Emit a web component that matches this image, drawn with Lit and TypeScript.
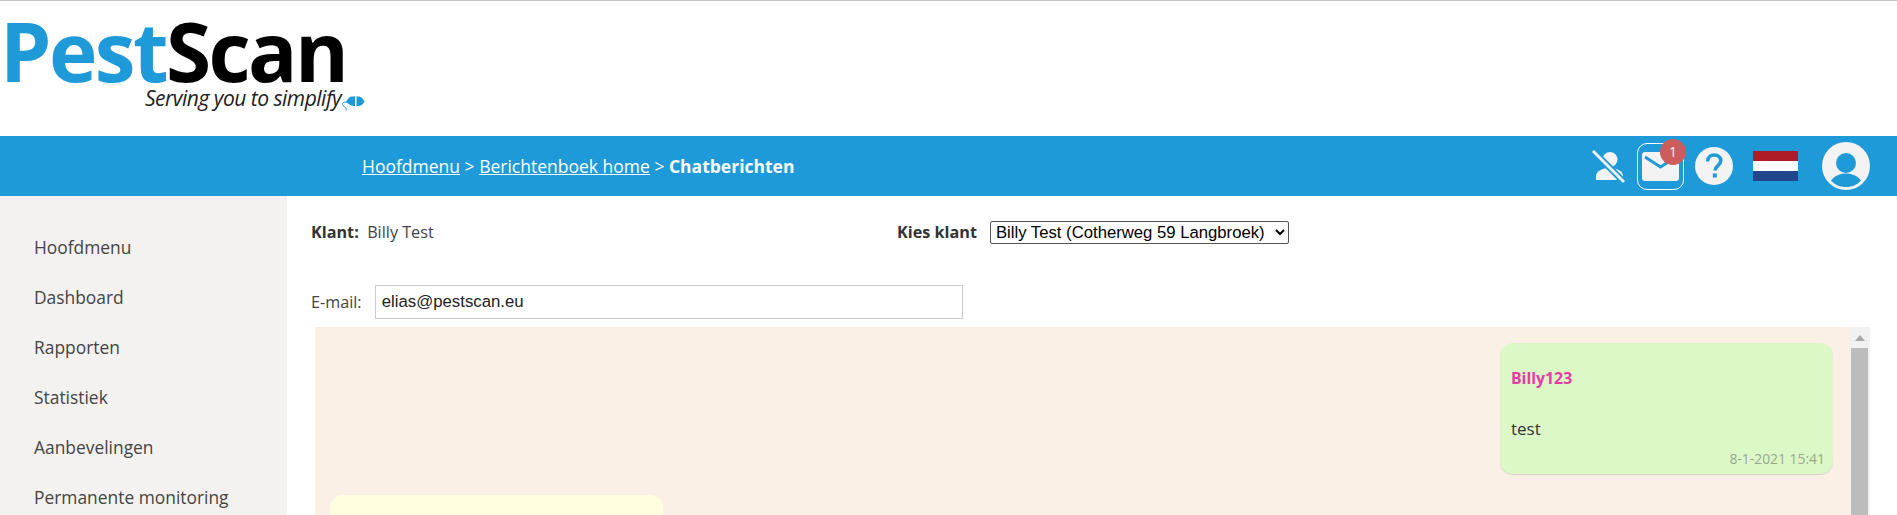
import { LitElement, html, css } from "lit";
import { customElement } from "lit/decorators.js";

const MENU = ["Hoofdmenu", "Dashboard", "Rapporten", "Statistiek", "Aanbevelingen", "Permanente monitoring"];

@customElement("app-root")
export class AppRoot extends LitElement {
  static styles = css`
    :host { display: block; height: 515px; overflow: hidden; font-family: "Open Sans", sans-serif; color: #444; background: #fff; }
    * { box-sizing: border-box; }
    .logo { height: 136px; border-top: 1px solid #c8c4cc; padding: 11px 0 0 0; display: flex; flex-direction: column; align-items: flex-start; }
    .brand { font-size: 82px; line-height: 76px; font-weight: 700; letter-spacing: -2.6px; color: #1f9ad9; white-space: nowrap; }
    .brand b { color: #000; font-weight: 700; }
    .slogan { display: flex; align-items: flex-start; margin: 0 0 0 145px; font-size: 21px; line-height: 20px; font-style: italic; letter-spacing: -.5px; color: #222; white-space: nowrap; }
    .slogan svg { margin: 8px 0 0 0; display: block; }
    .bar { height: 60px; background: #1f9ad9; display: flex; align-items: center; padding-left: 362px; color: #fff; font-size: 17.5px; }
    .crumbs { flex: 1; white-space: pre; }
    .crumbs u { text-decoration: underline; }
    .crumbs b { font-weight: 700; }
    .tools { display: flex; align-items: center; }
    .tools svg { display: block; }
    .off { margin-right: 12px; }
    .mail { position: relative; width: 47px; height: 47px; border: 1.5px solid #fff; border-radius: 10px; display: flex; align-items: center; justify-content: center; margin-right: 11px; }
    .badge { position: absolute; top: -5px; right: -3px; width: 26px; height: 26px; border-radius: 50%; background: #cd5c5c; color: #f3f3f3; font-size: 14px; line-height: 26px; text-align: center; }
    .flag { margin: 0 0 0 20px; width: 45px; height: 30px; display: flex; flex-direction: column; }
    .flag i { flex: 1; }
    .avatar { margin: 0 27px 0 24px; }
    .main { display: flex; height: 319px; }
    .side { width: 287px; background: #f3f2f1; padding: 26px 0 0 34px; }
    .side a { display: block; height: 50px; line-height: 50px; font-size: 17.4px; color: #444; white-space: nowrap; }
    .content { flex: 1; padding: 20px 27px 0 24px; font-size: 16.2px; min-width: 0; }
    .row1 { display: flex; align-items: center; height: 32px; }
    .klant { width: 586px; }
    label b, .klant b { font-weight: 700; color: #333; }
    select { font: 16.7px "Liberation Sans", sans-serif; width: 299px; height: 23px; margin-left: 13px; padding-left: 1px; color: #000; background: #fff; border: 1px solid #555; border-radius: 2px; }
    .row2 { display: flex; align-items: center; margin-top: 37px; height: 34px; }
    input { margin-left: 13px; width: 588px; height: 34px; border: 1px solid #ccc; padding: 0 6px; font: 16.8px "Liberation Sans", sans-serif; color: #222; }
    .panel { margin: 8px 0 0 4px; height: 300px; background: #faf0e6; display: flex; }
    .msgs { flex: 1; padding: 16px 17px 0 15px; display: flex; flex-direction: column; gap: 21px; min-width: 0; }
    .bubble { width: 333px; border-radius: 13px; }
    .me { align-self: flex-end; height: 131px; background: #dcf8c6; box-shadow: 0 1px 1px rgba(0,0,0,.13); padding: 24px 8px 0 11px; display: flex; flex-direction: column; }
    .them { height: 120px; background: #ffffe0; }
    .name { color: #e83aa5; font-weight: 700; font-size: 15.8px; line-height: 22px; }
    .txt { margin-top: 29px; font-size: 17px; line-height: 22px; color: #333; }
    .time { margin-top: 10px; text-align: right; font-size: 13.9px; line-height: 18px; color: #98a88e; }
    .sb { width: 20px; background: #f1f1f1; padding: 0 2px 0 1px; display: flex; flex-direction: column; }
    .arrow { height: 21px; display: flex; align-items: center; justify-content: center; }
    .thumb { flex: 1; background: #bcbcbc; }
  `;

  render() {
    return html`
      <div class="logo">
        <div class="brand">Pest<b>Scan</b></div>
        <div class="slogan">Serving you to simplify
          <svg width="24" height="16" viewBox="0 0 24 16">
            <path d="M14 0.500H10C8 1 6 4 5 5.500c2 2 4 4.500 9 4.500z" fill="#1f9ad9"/>
            <path d="M15.500 0.500H18c2.500 0 4.500 3 5.500 5-1 2-3 4.500-5.500 4.500h-2.500z" fill="#1f9ad9"/>
            <path d="M7 6.500C3 5.500 0 7 2 9.500c2 1.500 4 2.500 3 5" fill="none" stroke="#1f9ad9" stroke-width="1"/>
          </svg>
        </div>
      </div>
      <div class="bar">
        <div class="crumbs"><u>Hoofdmenu</u> &gt; <u>Berichtenboek home</u> &gt; <b>Chatberichten</b></div>
        <div class="tools">
          <svg class="off" width="33" height="33" viewBox="0 0 33 33">
            <circle cx="18" cy="9.500" r="7.500" fill="#f3f3f3"/>
            <path d="M4 30v-4c0-5 7-8 13-8 8 0 14 3 14 8v4z" fill="#f3f3f3"/>
            <path d="M1 1l31 31" stroke="#1f9ad9" stroke-width="6.500"/>
            <path d="M1 1l31 31" stroke="#f3f3f3" stroke-width="2.800"/>
          </svg>
          <div class="mail">
            <svg width="37" height="29" viewBox="0 0 37 29">
              <rect width="37" height="29" rx="3" fill="#f3f3f3"/>
              <path d="M3 5l15.500 10L34 5" fill="none" stroke="#1f9ad9" stroke-width="3"/>
            </svg>
            <span class="badge">1</span>
          </div>
          <svg width="38" height="38" viewBox="0 0 38 38">
            <circle cx="19" cy="19" r="19" fill="#f3f3f3"/>
            <path d="M12.500 14.500c0-4 3-6.500 6.800-6.500 3.800 0 6.500 2.300 6.500 5.600 0 5-5.800 5-5.800 10" fill="none" stroke="#1f9ad9" stroke-width="3.600"/>
            <rect x="17.800" y="26.500" width="4" height="4" fill="#1f9ad9"/>
          </svg>
          <div class="flag"><i style="background:#ae1c28"></i><i style="background:#fff"></i><i style="background:#21468b"></i></div>
          <svg class="avatar" width="48" height="48" viewBox="0 0 48 48">
            <circle cx="24" cy="24" r="24" fill="#f3f3f3"/>
            <circle cx="24" cy="21" r="10" fill="#1f9ad9"/>
            <path d="M9 38.500c4-5 9-7 15-7s11 2 15 7c-4 4.500-9 6.500-15 6.500S13 43 9 38.500z" fill="#1f9ad9"/>
          </svg>
        </div>
      </div>
      <div class="main">
        <nav class="side">${MENU.map((m) => html`<a>${m}</a>`)}</nav>
        <div class="content">
          <div class="row1">
            <div class="klant"><b>Klant:</b>&nbsp; Billy Test</div>
            <label><b>Kies klant</b></label>
            <select><option>Billy Test (Cotherweg 59 Langbroek)</option></select>
          </div>
          <div class="row2">
            <label>E-mail:</label>
            <input value="elias@pestscan.eu" />
          </div>
          <div class="panel">
            <div class="msgs">
              <div class="bubble me">
                <div class="name">Billy123</div>
                <div class="txt">test</div>
                <div class="time">8-1-2021 15:41</div>
              </div>
              <div class="bubble them"></div>
            </div>
            <div class="sb">
              <div class="arrow"><svg width="10" height="6" viewBox="0 0 10 6"><path d="M5 0l5 6H0z" fill="#a8a8a8"/></svg></div>
              <div class="thumb"></div>
            </div>
          </div>
        </div>
      </div>
    `;
  }
}
